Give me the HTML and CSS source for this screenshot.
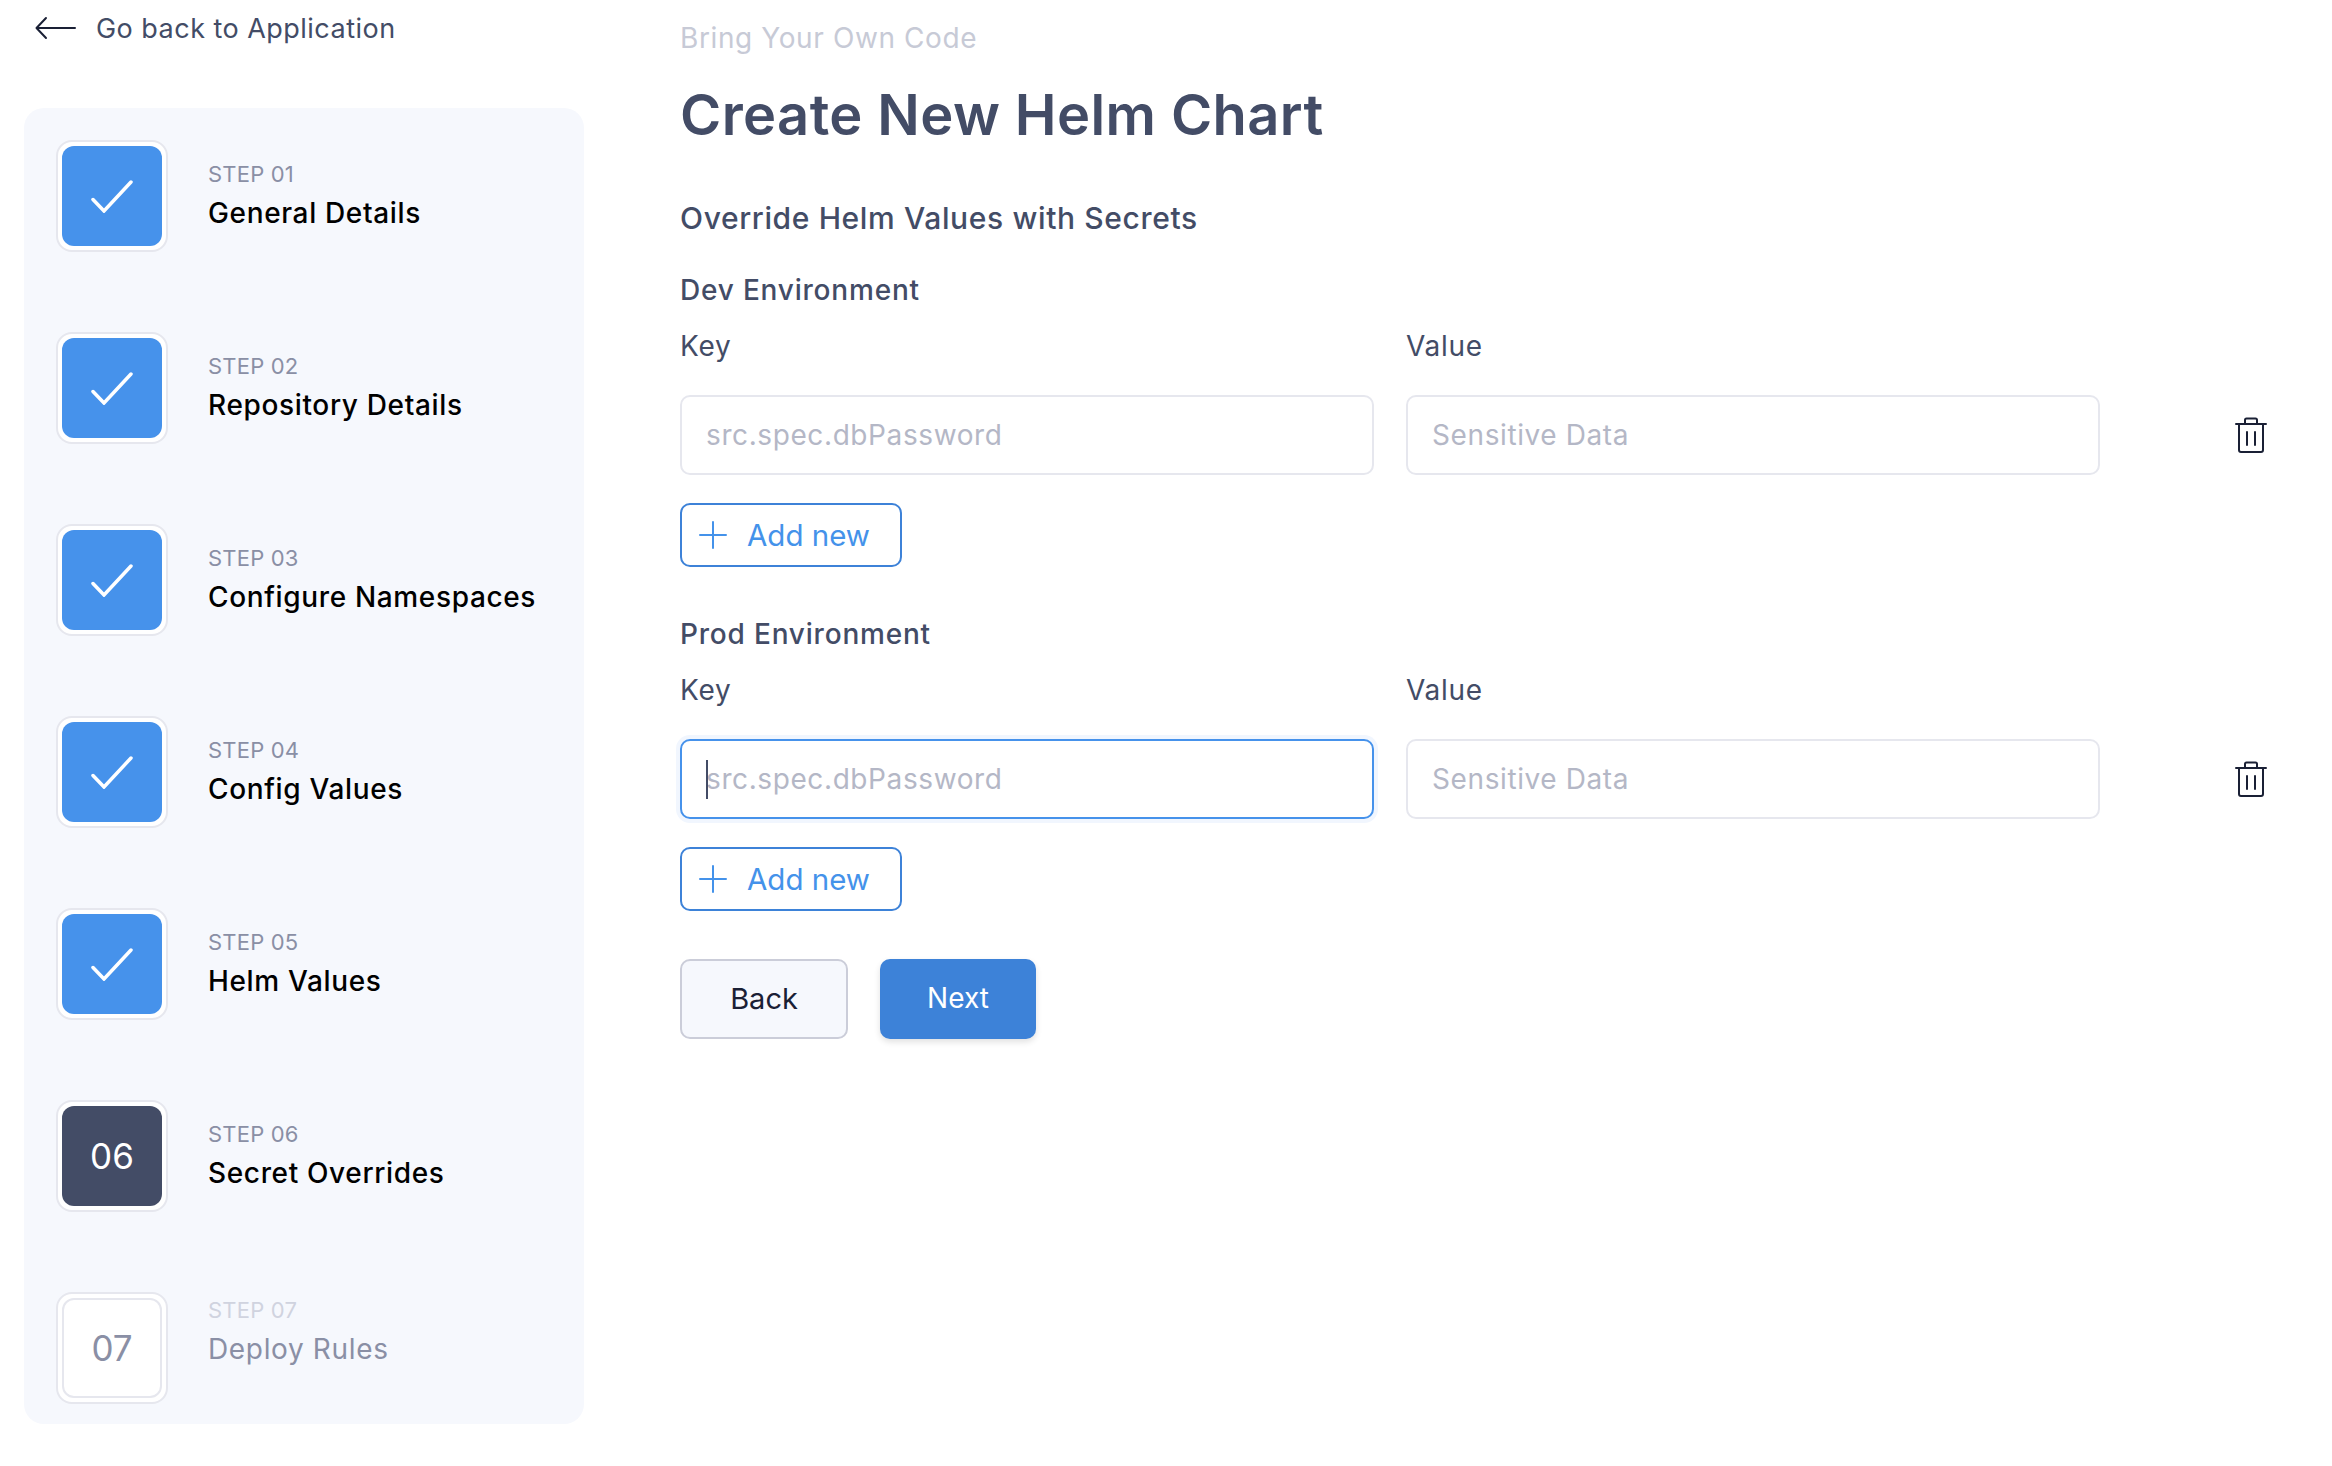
FILE: index.html
```html
<!DOCTYPE html>
<html lang="en">
<head>
<meta charset="utf-8">
<title>Create New Helm Chart</title>
<link rel="stylesheet" href="styles.css">
</head>
<body>
<div class="page">
  <aside class="side">
    <a class="back-link">
      <svg class="back-arrow" width="42" height="24" viewBox="0 0 42 24" fill="none" stroke="#1a2035" stroke-width="2" stroke-linecap="round" stroke-linejoin="round"><path d="M1.5 12H40M11 2L1.5 12L11 22"/></svg>
      <span>Go back to Application</span>
    </a>
    <ol class="steps">
      <li class="step">
        <div class="step-frame"><div class="step-box done"><svg width="42" height="33" viewBox="0 0 42 33" fill="none" stroke="#fff" stroke-width="3.5" stroke-linecap="round"><path d="M2 19.5L13 31L40 2"/></svg></div></div>
        <div class="step-text"><div class="step-num">STEP 01</div><div class="step-title">General Details</div></div>
      </li>
      <li class="step">
        <div class="step-frame"><div class="step-box done"><svg width="42" height="33" viewBox="0 0 42 33" fill="none" stroke="#fff" stroke-width="3.5" stroke-linecap="round"><path d="M2 19.5L13 31L40 2"/></svg></div></div>
        <div class="step-text"><div class="step-num">STEP 02</div><div class="step-title">Repository Details</div></div>
      </li>
      <li class="step">
        <div class="step-frame"><div class="step-box done"><svg width="42" height="33" viewBox="0 0 42 33" fill="none" stroke="#fff" stroke-width="3.5" stroke-linecap="round"><path d="M2 19.5L13 31L40 2"/></svg></div></div>
        <div class="step-text"><div class="step-num">STEP 03</div><div class="step-title">Configure Namespaces</div></div>
      </li>
      <li class="step">
        <div class="step-frame"><div class="step-box done"><svg width="42" height="33" viewBox="0 0 42 33" fill="none" stroke="#fff" stroke-width="3.5" stroke-linecap="round"><path d="M2 19.5L13 31L40 2"/></svg></div></div>
        <div class="step-text"><div class="step-num">STEP 04</div><div class="step-title">Config Values</div></div>
      </li>
      <li class="step">
        <div class="step-frame"><div class="step-box done"><svg width="42" height="33" viewBox="0 0 42 33" fill="none" stroke="#fff" stroke-width="3.5" stroke-linecap="round"><path d="M2 19.5L13 31L40 2"/></svg></div></div>
        <div class="step-text"><div class="step-num">STEP 05</div><div class="step-title">Helm Values</div></div>
      </li>
      <li class="step">
        <div class="step-frame"><div class="step-box current">06</div></div>
        <div class="step-text"><div class="step-num">STEP 06</div><div class="step-title">Secret Overrides</div></div>
      </li>
      <li class="step pending">
        <div class="step-frame"><div class="step-box todo">07</div></div>
        <div class="step-text"><div class="step-num">STEP 07</div><div class="step-title">Deploy Rules</div></div>
      </li>
    </ol>
  </aside>
  <main class="main">
    <div class="eyebrow">Bring Your Own Code</div>
    <h1 class="title">Create New Helm Chart</h1>
    <h2 class="section">Override Helm Values with Secrets</h2>

    <section class="env">
      <h3 class="env-name">Dev Environment</h3>
      <div class="fields">
        <label class="field"><span class="field-label">Key</span><input class="input" placeholder="src.spec.dbPassword"></label>
        <label class="field"><span class="field-label">Value</span><input class="input" placeholder="Sensitive Data"></label>
        <button class="trash" type="button" aria-label="Delete"><svg width="32" height="36" viewBox="0 0 32 36" fill="none" stroke="#1a2035" stroke-width="2" stroke-linejoin="round" stroke-linecap="round"><path d="M1 7H31M10 7V3Q10 1.5 11.5 1.5H20.5Q22 1.5 22 3V7M4 7V33Q4 35 6 35H26Q28 35 28 33V7M12 15V28M20 15V28"/></svg></button>
      </div>
      <button class="add" type="button"><svg width="28" height="28" viewBox="0 0 28 28" stroke="#4492ea" stroke-width="2" stroke-linecap="round"><path d="M14 1V27M1 14H27"/></svg><span>Add new</span></button>
    </section>

    <section class="env">
      <h3 class="env-name">Prod Environment</h3>
      <div class="fields">
        <label class="field"><span class="field-label">Key</span><span class="input-wrap"><input class="input focused" placeholder="src.spec.dbPassword"><span class="caret"></span></span></label>
        <label class="field"><span class="field-label">Value</span><input class="input" placeholder="Sensitive Data"></label>
        <button class="trash" type="button" aria-label="Delete"><svg width="32" height="36" viewBox="0 0 32 36" fill="none" stroke="#1a2035" stroke-width="2" stroke-linejoin="round" stroke-linecap="round"><path d="M1 7H31M10 7V3Q10 1.5 11.5 1.5H20.5Q22 1.5 22 3V7M4 7V33Q4 35 6 35H26Q28 35 28 33V7M12 15V28M20 15V28"/></svg></button>
      </div>
      <button class="add" type="button"><svg width="28" height="28" viewBox="0 0 28 28" stroke="#4492ea" stroke-width="2" stroke-linecap="round"><path d="M14 1V27M1 14H27"/></svg><span>Add new</span></button>
    </section>

    <div class="actions">
      <button class="btn btn-back" type="button">Back</button>
      <button class="btn btn-next" type="button">Next</button>
    </div>
  </main>
</div>
</body>
</html>
```

FILE: styles.css
```css
* { box-sizing: border-box; }
html, body { margin: 0; padding: 0; background: #fff; }
body { font-family: Inter, "Open Sans", sans-serif; color: #434c66; width: 2332px; height: 1466px; overflow: hidden; }
.page { display: flex; align-items: flex-start; }
.side { width: 680px; flex: none; padding-left: 24px; }
.back-link { display: flex; align-items: center; gap: 19px; height: 56px; padding-left: 11px; font-size: 27px; letter-spacing: 0.47px; color: #434c66; margin-bottom: 52px; }
.back-arrow { flex: none; }
.steps { list-style: none; margin: 0; width: 560px; height: 1316px; padding: 32px 0 0 32px; background: #f6f8fd; border-radius: 20px; display: flex; flex-direction: column; gap: 80px; }
.step { display: flex; align-items: center; height: 112px; gap: 40px; }
.step-frame { width: 112px; height: 112px; flex: none; border: 2px solid #e6e7ee; border-radius: 16px; background: #fff; padding: 4px; }
.step-box { width: 100%; height: 100%; border-radius: 12px; display: flex; align-items: center; justify-content: center; font-size: 35px; }
.step-box.done { background: #4692eb; }
.step-box.current { background: #434c66; color: #fff; }
.step-box.todo { background: #fff; border: 2px solid #e6e7ee; color: #8a8fa5; }
.step-text { display: flex; flex-direction: column; gap: 7px; margin-top: -1px; }
.step-num { font-size: 22px; line-height: 28px; color: #8a8fa5; letter-spacing: 0.2px; }
.step-title { font-size: 28px; line-height: 36px; color: #000; font-weight: 500; letter-spacing: 0.65px; white-space: nowrap; }
.pending .step-num { color: #d0d3df; }
.pending .step-title { color: #8a8fa5; font-weight: 400; }
.pending .step-text { margin-top: -33px; }
.main { flex: none; width: 1652px; }
.eyebrow { font-size: 28px; line-height: 36px; color: #c7cad6; margin-top: 20px; letter-spacing: 0.6px; }
.title { margin: 23px 0 0; font-size: 56px; line-height: 72px; font-weight: 600; color: #434c66; letter-spacing: 0.4px; }
.section { margin: 47px 0 0; font-size: 30px; line-height: 40px; font-weight: 500; color: #434c66; letter-spacing: 0.63px; }
.env { margin-top: 32px; }
.env + .env { margin-top: 47px; }
.env-name { margin: 0; font-size: 28px; line-height: 40px; font-weight: 500; color: #434c66; letter-spacing: 0.8px; }
.fields { display: flex; align-items: flex-end; gap: 32px; margin-top: 18px; }
.field { width: 694px; display: flex; flex-direction: column; gap: 31px; }
.field-label { font-size: 28px; line-height: 36px; color: #434c66; letter-spacing: 0.7px; }
.input-wrap { position: relative; display: block; }
.input { width: 100%; height: 80px; padding: 0 24px; border: 2px solid #e6e7ee; border-radius: 10px; background: #fff; font: inherit; font-size: 28px; letter-spacing: 0.6px; outline: none; display: block; }
.input::placeholder { color: #b4b7c6; opacity: 1; }
.input.focused { border-color: #4692eb; box-shadow: 0 0 0 4px #f1f6fe; }
.caret { position: absolute; left: 26px; top: 21px; width: 2px; height: 39px; background: #434c66; }
.trash { border: 0; background: none; padding: 0; margin: 0 0 22px 103px; width: 32px; height: 36px; }
.trash svg { display: block; }
.add { display: flex; align-items: center; gap: 20px; margin-top: 28px; width: 222px; height: 64px; padding: 0 0 0 17px; background: #fff; border: 2px solid #3d82d8; border-radius: 10px; color: #4492ea; font: inherit; font-size: 29.5px; color: #4492ea; }
.add svg { flex: none; }
.actions { display: flex; gap: 32px; margin-top: 48px; }
.btn { height: 80px; border-radius: 10px; font: inherit; font-size: 29px; padding: 0 0 2px; }
.btn-back { width: 168px; background: #f6f8fd; border: 2px solid #cbcdd9; color: #1a2035; }
.btn-next { width: 156px; background: #3d82d8; border: 0; color: #fff; font-size: 28px; box-shadow: 0 3px 6px rgba(0,0,0,.12); }
```
